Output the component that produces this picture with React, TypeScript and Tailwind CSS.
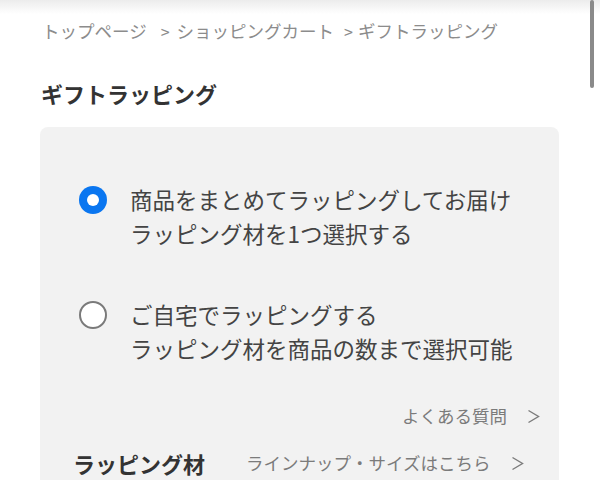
import type { ReactNode } from 'react';

const font = { fontFamily: '"Noto Sans CJK JP", "Noto Sans", sans-serif' };

type RadioOptionProps = {
  checked: boolean;
  lines: [string, string];
};

const RadioOption = ({ checked, lines }: RadioOptionProps) => (
  <label className="flex items-start gap-[23px]">
    <span className="flex h-[35px] items-center">
      {checked ? (
        <span className="flex h-[28px] w-[28px] items-center justify-center rounded-full bg-[#0a76f0]">
          <span className="h-[12px] w-[12px] rounded-full bg-white" />
        </span>
      ) : (
        <span className="h-[28px] w-[28px] rounded-full border-[2.5px] border-[#7a7a7a] bg-white" />
      )}
    </span>
    <span className="text-[22.5px] leading-[34px] text-[#444]">
      {lines[0]}
      <br />
      {lines[1]}
    </span>
  </label>
);

const Chevron = () => (
  <svg width="13" height="15" viewBox="0 0 13 15" className="ml-[20px]" fill="none">
    <path d="M1.5 1.5 L11.5 7.5 L1.5 13.5" stroke="#7b7b7b" strokeWidth="1.4" />
  </svg>
);

const LinkText = ({ children, className }: { children: ReactNode; className?: string }) => (
  <span className={`flex items-center text-[17.5px] leading-[24px] text-[#7b7b7b] ${className ?? ''}`}>
    {children}
    <Chevron />
  </span>
);

export default function App() {
  return (
    <div className="relative h-[480px] w-[600px] overflow-hidden bg-white" style={font}>
      <div className="h-[14px] bg-gradient-to-b from-[#ececec] to-white" />
      <div className="absolute right-[6px] top-0 h-[88px] w-[4px] rounded-full bg-[#8a8a8a]" />

      <div className="pl-[42px] pt-[5px]">
        <nav className="flex items-center text-[17.5px] leading-[24px] text-[#8c8c8c]">
          <span>トップページ</span>
          <span className="ml-[14px] mr-[7px] text-[16px]">&gt;</span>
          <span>ショッピングカート</span>
          <span className="ml-[10px] mr-[5px] text-[16px]">&gt;</span>
          <span>ギフトラッピング</span>
        </nav>
        <h1 className="ml-[-1px] mt-[35px] text-[22px] font-bold leading-[30px] text-[#333]">ギフトラッピング</h1>
      </div>

      <section className="ml-[40px] mt-[19px] w-[519px] rounded-[8px] bg-[#f2f2f2] pb-[20px] pl-[39px] pr-[19px] pt-[55px]">
        <div className="flex flex-col gap-[47px]">
          <RadioOption checked lines={['商品をまとめてラッピングしてお届け', 'ラッピング材を1つ選択する']} />
          <RadioOption checked={false} lines={['ご自宅でラッピングする', 'ラッピング材を商品の数まで選択可能']} />
        </div>

        <div className="mt-[39px] flex justify-end">
          <LinkText>よくある質問</LinkText>
        </div>

        <div className="mt-[20px] flex items-center">
          <span className="-ml-[6px] text-[22px] font-bold leading-[30px] text-[#333]">ラッピング材</span>
          <LinkText className="ml-[41px]">ラインナップ・サイズはこちら</LinkText>
        </div>
      </section>
    </div>
  );
}
